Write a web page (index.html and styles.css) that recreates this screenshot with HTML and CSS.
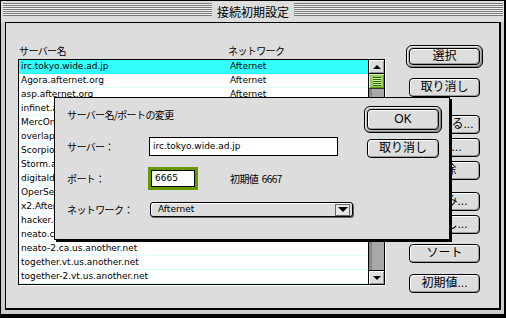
FILE: index.html
```html
<!DOCTYPE html>
<html lang="ja">
<head>
    <meta charset="UTF-8">
    <title>接続初期設定</title>
    <link rel="stylesheet" href="styles.css">
</head>
<body>
    <div class="window">
        <div class="titlebar">
            <div class="stripes"></div>
            <div class="title">接続初期設定</div>
            <div class="stripes"></div>
        </div>
        <div class="frame">
            <div class="content">
                <div class="server-list">
                    <div class="list-head">
                        <span class="head-name">サーバー名</span>
                        <span class="head-net">ネットワーク</span>
                    </div>
                    <div class="list">
                        <div class="rows">
                            <div class="row selected"><span class="name">irc.tokyo.wide.ad.jp</span><span class="net">Afternet</span></div>
                            <div class="row"><span class="name">Agora.afternet.org</span><span class="net">Afternet</span></div>
                            <div class="row"><span class="name">asp.afternet.org</span><span class="net">Afternet</span></div>
                            <!-- these rows sit under the dialog -->
                            <div class="row"><span class="name">infinet.afternet.org</span></div>
                            <div class="row"><span class="name">MercOne.afternet.org</span></div>
                            <div class="row"><span class="name">overlap.afternet.org</span></div>
                            <div class="row"><span class="name">Scorpio.afternet.org</span></div>
                            <div class="row"><span class="name">Storm.afternet.org</span></div>
                            <div class="row"><span class="name">digitaldreams.afternet.org</span></div>
                            <div class="row"><span class="name">OperServ.afternet.org</span></div>
                            <div class="row"><span class="name">x2.Afternet.org</span></div>
                            <div class="row"><span class="name">hacker.afternet.org</span></div>
                            <div class="row"><span class="name">neato.ca.us.another.net</span></div>
                            <div class="row"><span class="name">neato-2.ca.us.another.net</span></div>
                            <div class="row"><span class="name">together.vt.us.another.net</span></div>
                            <div class="row"><span class="name">together-2.vt.us.another.net</span></div>
                        </div>
                        <div class="scrollbar">
                            <div class="arrow up"></div>
                            <div class="track"><div class="thumb"><div class="grip"></div></div></div>
                            <div class="arrow down"></div>
                        </div>
                    </div>
                </div>
                <div class="side-buttons">
                    <div class="default-ring"><button class="btn">選択</button></div>
                    <button class="btn gap-10">取り消し</button>
                    <button class="btn gap-18">追加する...</button>
                    <button class="btn gap-4">編集...</button>
                    <button class="btn gap-4">削除</button>
                    <button class="btn gap-12">読込み...</button>
                    <button class="btn gap-4">書出し...</button>
                    <button class="btn gap-10">ソート</button>
                    <button class="btn gap-11">初期値...</button>
                </div>
            </div>
        </div>

        <div class="dialog">
            <div class="dialog-form">
                <div class="dialog-title">サーバー名/ポートの変更</div>
                <div class="field-row row-server">
                    <label for="server">サーバー：</label>
                    <div class="textbox wide" id="server">irc.tokyo.wide.ad.jp</div>
                </div>
                <div class="field-row row-port">
                    <label for="port">ポート：</label>
                    <div class="focus-ring"><div class="textbox short" id="port">6665</div></div>
                    <span class="hint">初期値 6667</span>
                </div>
                <div class="field-row row-net">
                    <label>ネットワーク：</label>
                    <div class="popup"><span class="popup-text">Afternet</span><span class="popup-arrow"></span></div>
                </div>
            </div>
            <div class="dialog-buttons">
                <div class="default-ring big"><button class="btn">OK</button></div>
                <button class="btn cancel">取り消し</button>
            </div>
        </div>
    </div>
</body>
</html>
```

FILE: styles.css
```css
* {
    box-sizing: border-box;
}

body {
    margin: 0;
    background: #fff;
    font-family: "DejaVu Sans", "Noto Sans CJK JP", sans-serif;
    font-size: 9px;
    color: #000;
}

.window {
    position: relative;
    width: 506px;
    height: 318px;
    background: #ccc;
    border: 1px solid #000;
    border-right-width: 2px;
    border-bottom-width: 4px;
    display: flex;
    flex-direction: column;
}

/* title bar */
.titlebar {
    height: 21px;
    flex: none;
    display: flex;
    align-items: flex-start;
    padding: 2px 1px 0 2px;
    background: #ddd;
}

.stripes {
    flex: 1;
    height: 13px;
    background: repeating-linear-gradient(to bottom, #777 0 1px, #f2f2f2 1px 2px);
    border-bottom: 1px solid #777;
}

.title {
    padding: 0 5px;
    font-family: "Noto Sans CJK JP", sans-serif;
    font-size: 12px;
    line-height: 17px;
}

/* frame around the content */
.frame {
    flex: 1;
    display: flex;
    padding: 0 3px 4px 4px;
}

.content {
    flex: 1;
    display: flex;
    align-items: flex-start;
    background: #ddd;
    border: 1px solid #000;
    border-right-width: 2px;
    border-bottom-width: 2px;
    padding: 22px 0 0 12px;
}

.list-head,
.dialog-title,
.field-row label,
.hint {
    font-family: "Noto Sans CJK JP", sans-serif;
    font-size: 10px;
    letter-spacing: -0.6px;
}

/* server list */
.server-list {
    width: 367px;
}

.list-head {
    display: flex;
    height: 12px;
    line-height: 12px;
    padding-left: 1px;
}

.head-name {
    width: 209px;
}

.list {
    margin-top: 2px;
    display: flex;
    height: 226px;
    background: #fff;
    border: 1px solid #000;
    box-shadow: 1px 1px 0 #fff;
}

.rows {
    flex: 1;
}

.row {
    display: flex;
    height: 14px;
    line-height: 13px;
    padding-left: 2px;
    border-bottom: 1px solid #dcffff;
    white-space: nowrap;
    overflow: hidden;
}

.row.selected {
    background: #33ffff;
    border-bottom-color: #33ffff;
}

.row .name {
    width: 209px;
    flex: none;
}

.scrollbar {
    width: 16px;
    border-left: 1px solid #000;
    display: flex;
    flex-direction: column;
}

.arrow {
    height: 14px;
    background: #ddd;
    box-shadow: inset 1px 1px 0 #fff, inset -1px -1px 0 #999;
    display: flex;
    align-items: center;
    justify-content: center;
}

.arrow.up {
    border-bottom: 1px solid #000;
}

.arrow.down {
    border-top: 1px solid #000;
}

.arrow.up::after {
    content: "";
    border-left: 4px solid transparent;
    border-right: 4px solid transparent;
    border-bottom: 4px solid #000;
}

.arrow.down::after {
    content: "";
    border-left: 4px solid transparent;
    border-right: 4px solid transparent;
    border-top: 4px solid #000;
}

.track {
    flex: 1;
    background: #a8a8a8;
    box-shadow: inset 3px 0 0 #888;
}

.thumb {
    height: 15px;
    background: #9c6;
    border-bottom: 1px solid #333;
    box-shadow: inset 1px 1px 0 #cf9, inset -1px -1px 0 #690;
    display: flex;
    align-items: center;
    justify-content: center;
}

.grip {
    width: 8px;
    height: 9px;
    background: repeating-linear-gradient(to bottom, #360 0 1px, #cf9 1px 2px);
}

/* push buttons */
.side-buttons {
    margin-left: 21px;
    display: flex;
    flex-direction: column;
}

.btn {
    display: block;
    width: 71px;
    height: 19px;
    padding: 0;
    border: 1px solid #000;
    border-radius: 4px;
    background: #ddd;
    box-shadow: inset 1px 1px 0 #fff, inset -1px -1px 0 #999;
    font-family: "Liberation Sans", "Noto Sans CJK JP", sans-serif;
    font-size: 12px;
    line-height: 17px;
    color: #000;
    text-align: center;
    white-space: nowrap;
    overflow: hidden;
}

.side-buttons > .btn {
    margin-left: 3px;
}

.default-ring {
    width: 77px;
    height: 23px;
    padding: 2px;
    border: 1px solid #000;
    border-radius: 6px;
    background: #bbb;
    box-shadow: inset 1px 1px 0 #eee, inset -1px -1px 0 #888;
}

.default-ring .btn {
    height: 17px;
    line-height: 15px;
}

.gap-4 { margin-top: 4px; }
.gap-10 { margin-top: 10px; }
.gap-11 { margin-top: 11px; }
.gap-12 { margin-top: 12px; }
.gap-18 { margin-top: 18px; }

/* modal dialog */
.dialog {
    position: absolute;
    left: 53px;
    top: 96px;
    width: 396px;
    height: 143px;
    background: #ddd;
    border: 1px solid #000;
    box-shadow: 2px 2px 0 #000;
    display: flex;
    padding: 8px 7px 0 12px;
}

.dialog-form {
    flex: 1;
}

.dialog-title {
    margin-top: 3px;
    line-height: 12px;
}

.field-row {
    display: flex;
    align-items: center;
}

.field-row label {
    width: 78px;
    margin-right: 4px;
    flex: none;
    line-height: 12px;
}

.row-server { margin-top: 16px; }
.row-port { margin-top: 11px; }
.row-net { margin-top: 12px; }

.row-port label {
    margin-right: 3px;
}

.textbox {
    height: 19px;
    background: #fff;
    border: 1px solid #000;
    padding-left: 3px;
    line-height: 17px;
}

.textbox.wide {
    width: 189px;
}

.focus-ring {
    width: 50px;
    height: 23px;
    border: 3px solid #690;
}

.textbox.short {
    width: 44px;
    height: 17px;
    line-height: 15px;
}

.hint {
    margin-left: 32px;
    line-height: 12px;
    word-spacing: 2px;
}

.popup {
    margin-left: 1px;
    width: 203px;
    height: 15px;
    display: flex;
    align-items: center;
    justify-content: space-between;
    padding: 0 2px 0 7px;
    border: 1px solid #000;
    border-radius: 3px;
    background: #ddd;
    box-shadow: inset 1px 1px 0 #fff, 1px 1px 0 #666;
}

.popup-text {
    line-height: 13px;
}

.popup-arrow {
    width: 15px;
    height: 12px;
    border: 1px solid #666;
    background: #e6e6e6;
    display: flex;
    align-items: center;
    justify-content: center;
}

.popup-arrow::after {
    content: "";
    border-left: 5px solid transparent;
    border-right: 5px solid transparent;
    border-top: 5px solid #000;
}

.dialog-buttons {
    width: 78px;
}

.default-ring.big {
    width: 78px;
    height: 27px;
}

.default-ring.big .btn {
    width: 72px;
    height: 21px;
    line-height: 19px;
}

.btn.cancel {
    margin: 6px 0 0 3px;
    width: 72px;
}
```
